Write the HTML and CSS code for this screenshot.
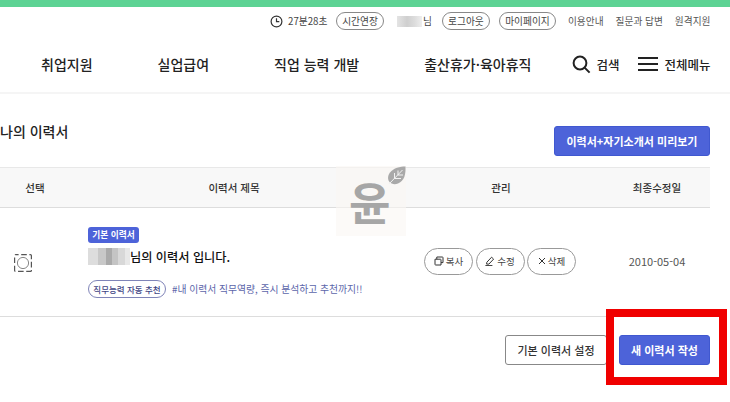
FILE: index.html
```html
<!DOCTYPE html>
<html lang="ko">
<head>
    <meta charset="UTF-8">
    <meta name="viewport" content="width=device-width, initial-scale=1.0">
    <title>나의 이력서</title>
    <link rel="stylesheet" href="styles.css">
</head>
<body>
    <div class="topbar"></div>

    <div class="util">
        <svg class="clock" width="13" height="13" viewBox="0 0 13 13"><circle cx="6.5" cy="6.5" r="5.4"/><path d="M6.5 3.2v3.5h2.8"/></svg>
        <span class="timer">27분28초</span>
        <a class="pill pill-extend">시간연장</a>
        <span class="mosaic mosaic-user"></span>
        <span class="user-suffix">님</span>
        <a class="pill pill-logout">로그아웃</a>
        <a class="pill pill-mypage">마이페이지</a>
        <a class="util-link">이용안내</a>
        <a class="util-link">질문과 답변</a>
        <a class="util-link">원격지원</a>
    </div>

    <div class="nav">
        <a class="nav-item">취업지원</a>
        <a class="nav-item">실업급여</a>
        <a class="nav-item">직업 능력 개발</a>
        <a class="nav-item">출산휴가·육아휴직</a>
        <div class="nav-tools">
            <svg class="tool-icon" width="19" height="19" viewBox="0 0 19 19"><circle cx="8" cy="8" r="6.4"/><path d="M12.6 12.6l5 5"/></svg>
            <span class="tool-label">검색</span>
            <svg class="tool-icon menu-icon" width="20" height="16" viewBox="0 0 20 16"><path d="M0 2h20M0 8h20M0 14h20"/></svg>
            <span class="tool-label">전체메뉴</span>
        </div>
    </div>

    <div class="content">
        <div class="title-row">
            <h2>나의 이력서</h2>
            <button class="btn btn-blue btn-preview">이력서+자기소개서 미리보기</button>
        </div>

        <div class="table-head">
            <div>선택</div>
            <div>이력서 제목</div>
            <div>관리</div>
            <div>최종수정일</div>
        </div>

        <div class="table-row">
            <div class="cell-select">
                <svg width="18" height="18" viewBox="0 0 18 18"><rect class="dash" x="0.6" y="0.6" width="16.8" height="16.8" rx="1"/><circle class="ring" cx="9" cy="9" r="5.6"/></svg>
            </div>
            <div class="cell-title">
                <span class="badge">기본 이력서</span>
                <div class="resume-name"><span class="mosaic mosaic-name"></span>님의 이력서 입니다.</div>
                <div class="tag-line">
                    <span class="tag">직무능력 자동 추천</span>
                    <span class="tag-text">#내 이력서 직무역량, 즉시 분석하고 추천까지!!</span>
                </div>
            </div>
            <div class="cell-actions">
                <a class="action">
                    <svg width="10" height="10" viewBox="0 0 10 10"><path d="M1 3.2h5.4a.6.6 0 0 1 .6.6v5.2H1.6a.6.6 0 0 1-.6-.6z"/><path d="M2.8 3.2V1h5.6a.6.6 0 0 1 .6.6v5H7"/></svg>복사
                </a>
                <a class="action">
                    <svg width="10" height="10" viewBox="0 0 10 10"><path d="M1.8 6.3L6.6 1.2l2 1.9-4.7 5H1.6zM.4 9.6h7"/></svg>수정
                </a>
                <a class="action">
                    <svg width="8" height="8" viewBox="0 0 8 8"><path d="M1 1l6 6M7 1L1 7"/></svg>삭제
                </a>
            </div>
            <div class="cell-date">2010-05-04</div>
        </div>

        <div class="bottom-btns">
            <button class="btn btn-white">기본 이력서 설정</button>
            <button class="btn btn-blue btn-new">새 이력서 작성</button>
        </div>
    </div>

    <!-- watermark and red marker sit on top of the screenshot -->
    <div class="watermark">
        <span class="watermark-char">윤</span>
        <svg class="leaf" width="19" height="20" viewBox="0 0 19 20"><path class="leaf-body" d="M18.5 0.5C18.8 8 17.5 15 11 17.5 7.5 18.8 4.5 18 2.5 16 .5 13.5.5 10 3 6.5 6.5 2 13 .5 18.5.5z"/><path class="leaf-vein" d="M2 18L15.5 4M7.5 12.5V7M7.5 12.5h6.5M11 9V4.5M11 9h5"/></svg>
    </div>
    <div class="marker"></div>
</body>
</html>
```
FILE: styles.css
```css
* {
    box-sizing: border-box;
}
html, body {
    margin: 0;
    height: 402px;
    overflow: hidden;
}
body {
    position: relative;
    font-family: "Noto Sans CJK KR", "Noto Sans", sans-serif;
    color: #222;
    background-color: #fff;
}
.topbar {
    height: 7px;
    background-color: #5dd394;
}

/* utility row */
.util {
    display: flex;
    align-items: center;
    height: 28px;
    padding-left: 270px;
    font-size: 9.7px;
    color: #444;
}
.clock {
    fill: none;
    stroke: #333;
    stroke-width: 1.2;
}
.timer {
    margin-left: 5px;
    width: 48px;
    white-space: nowrap;
}
.pill {
    display: flex;
    align-items: center;
    justify-content: center;
    height: 18px;
    border: 1px solid #888;
    border-radius: 9px;
    white-space: nowrap;
}
.pill-extend {
    width: 48px;
}
.pill-logout {
    width: 48px;
    margin-left: 10px;
    margin-right: 9px;
}
.pill-mypage {
    width: 57px;
}
.user-suffix {
    margin-left: 1px;
}
.mosaic {
    display: inline-block;
    background-color: #ddd;
}
.mosaic-user {
    width: 25px;
    height: 11px;
    margin-left: 13px;
    background-image: linear-gradient(90deg, #e4e4e4, #cfcfcf 40%, #dcdcdc 70%, #eee);
}
.util-link {
    margin-left: 12px;
    white-space: nowrap;
    color: #555;
}

/* main menu */
.nav {
    display: flex;
    align-items: center;
    height: 59px;
    padding-left: 41px;
    padding-top: 1px;
    border-bottom: 2px solid #f5f5f5;
    font-size: 14px;
    font-weight: 500;
    color: #222;
}
.nav-item {
    margin-right: 65px;
    white-space: nowrap;
}
.nav-tools {
    display: flex;
    align-items: center;
    margin-left: -24px;
}
.tool-icon {
    fill: none;
    stroke: #222;
    stroke-width: 2;
}
.tool-label {
    margin-left: 5px;
    font-size: 12.5px;
    white-space: nowrap;
}
.menu-icon {
    margin-left: 19px;
    margin-right: 1px;
}

/* content */
.content {
    padding-right: 20px;
}
.title-row {
    display: flex;
    justify-content: space-between;
    align-items: flex-start;
    height: 73px;
    padding-top: 32px;
}
h2 {
    margin: 0;
    margin-top: -5px;
    font-size: 14px;
    font-weight: 500;
}
.btn {
    display: block;
    height: 30px;
    padding: 0;
    border-radius: 3px;
    font-family: inherit;
    font-size: 11px;
    font-weight: 500;
    white-space: nowrap;
}
.btn-blue {
    border: 1px solid #4058d0;
    background-color: #4d63d9;
    color: #fff;
    font-weight: 700;
}
.btn-preview {
    width: 156px;
}
.table-head {
    display: grid;
    grid-template-columns: 70px 328px 206px 106px;
    align-items: center;
    height: 41px;
    border-top: 1px solid #e8e8e8;
    border-bottom: 1px solid #ddd;
    background-color: #f8f8f8;
    font-size: 10.5px;
    font-weight: 500;
    text-align: center;
    color: #333;
}
.table-row {
    display: grid;
    grid-template-columns: 70px 328px 206px 106px;
    align-items: center;
    height: 109px;
    padding-bottom: 2px;
    border-bottom: 1px solid #ddd;
}
.cell-select {
    display: flex;
    padding-left: 14px;
    padding-top: 3px;
}
.dash {
    fill: none;
    stroke: #555;
    stroke-width: 1.2;
    stroke-dasharray: 6 2.6 5.6 2.6;
    stroke-dashoffset: 3;
}
.ring {
    fill: none;
    stroke: #888;
    stroke-width: 1;
}
.cell-title {
    padding-left: 18px;
    padding-top: 2px;
}
.badge {
    display: block;
    width: 51px;
    height: 16px;
    border-radius: 3px;
    background-color: #4d63d9;
    color: #fff;
    font-size: 8.7px;
    font-weight: 700;
    line-height: 16px;
    text-align: center;
}
.resume-name {
    display: flex;
    align-items: center;
    height: 20px;
    margin-top: 4px;
    font-size: 12.2px;
    font-weight: 500;
    color: #111;
}
.mosaic-name {
    width: 42px;
    height: 17px;
    background-image: linear-gradient(90deg, #ddd 24%, #c8c8c8 24%, #c8c8c8 43%, #aaa 43%, #aaa 57%, #c4c4c4 57%, #c4c4c4 71%, #d8d8d8 71%, #d8d8d8 88%, #e8e8e8 88%);
}
.tag-line {
    display: flex;
    align-items: center;
    margin-top: 13px;
}
.tag {
    width: 78px;
    height: 18px;
    border: 1px solid #7f84b8;
    border-radius: 9px;
    font-size: 8.5px;
    font-weight: 500;
    line-height: 16px;
    text-align: center;
    color: #3f4685;
    white-space: nowrap;
}
.tag-text {
    margin-left: 6px;
    font-size: 9.8px;
    color: #5c66aa;
    white-space: nowrap;
}
.cell-actions {
    display: flex;
    gap: 2.5px;
    padding-left: 26px;
}
.action {
    display: flex;
    align-items: center;
    justify-content: center;
    gap: 2px;
    width: 49px;
    height: 27px;
    border: 1px solid #999;
    border-radius: 14px;
    font-size: 9.5px;
    color: #444;
    white-space: nowrap;
}
.action svg {
    fill: none;
    stroke: #333;
    stroke-width: 1;
}
.cell-date {
    font-size: 11px;
    text-align: center;
    color: #555;
}
.bottom-btns {
    display: flex;
    justify-content: flex-end;
    gap: 12px;
    padding-top: 18px;
}
.btn-white {
    width: 102px;
    border: 1px solid #888;
    background-color: #fff;
    color: #333;
}
.btn-new {
    width: 91px;
}

/* overlays */
.watermark {
    position: absolute;
    left: 336px;
    top: 166px;
    width: 70px;
    height: 70px;
    background-color: rgba(250, 247, 243, 0.6);
}
.watermark-char {
    position: absolute;
    left: 13px;
    top: 3px;
    font-size: 45px;
    font-weight: 700;
    line-height: 66px;
    color: #a6a6a6;
}
.leaf {
    position: absolute;
    right: 0;
    top: 0;
}
.leaf-body {
    fill: #a9a9a9;
}
.leaf-vein {
    fill: none;
    stroke: #f2f2f2;
    stroke-width: 1;
}
.marker {
    position: absolute;
    left: 606px;
    top: 309px;
    width: 121px;
    height: 76px;
    border: 8px solid #f00000;
}
```
